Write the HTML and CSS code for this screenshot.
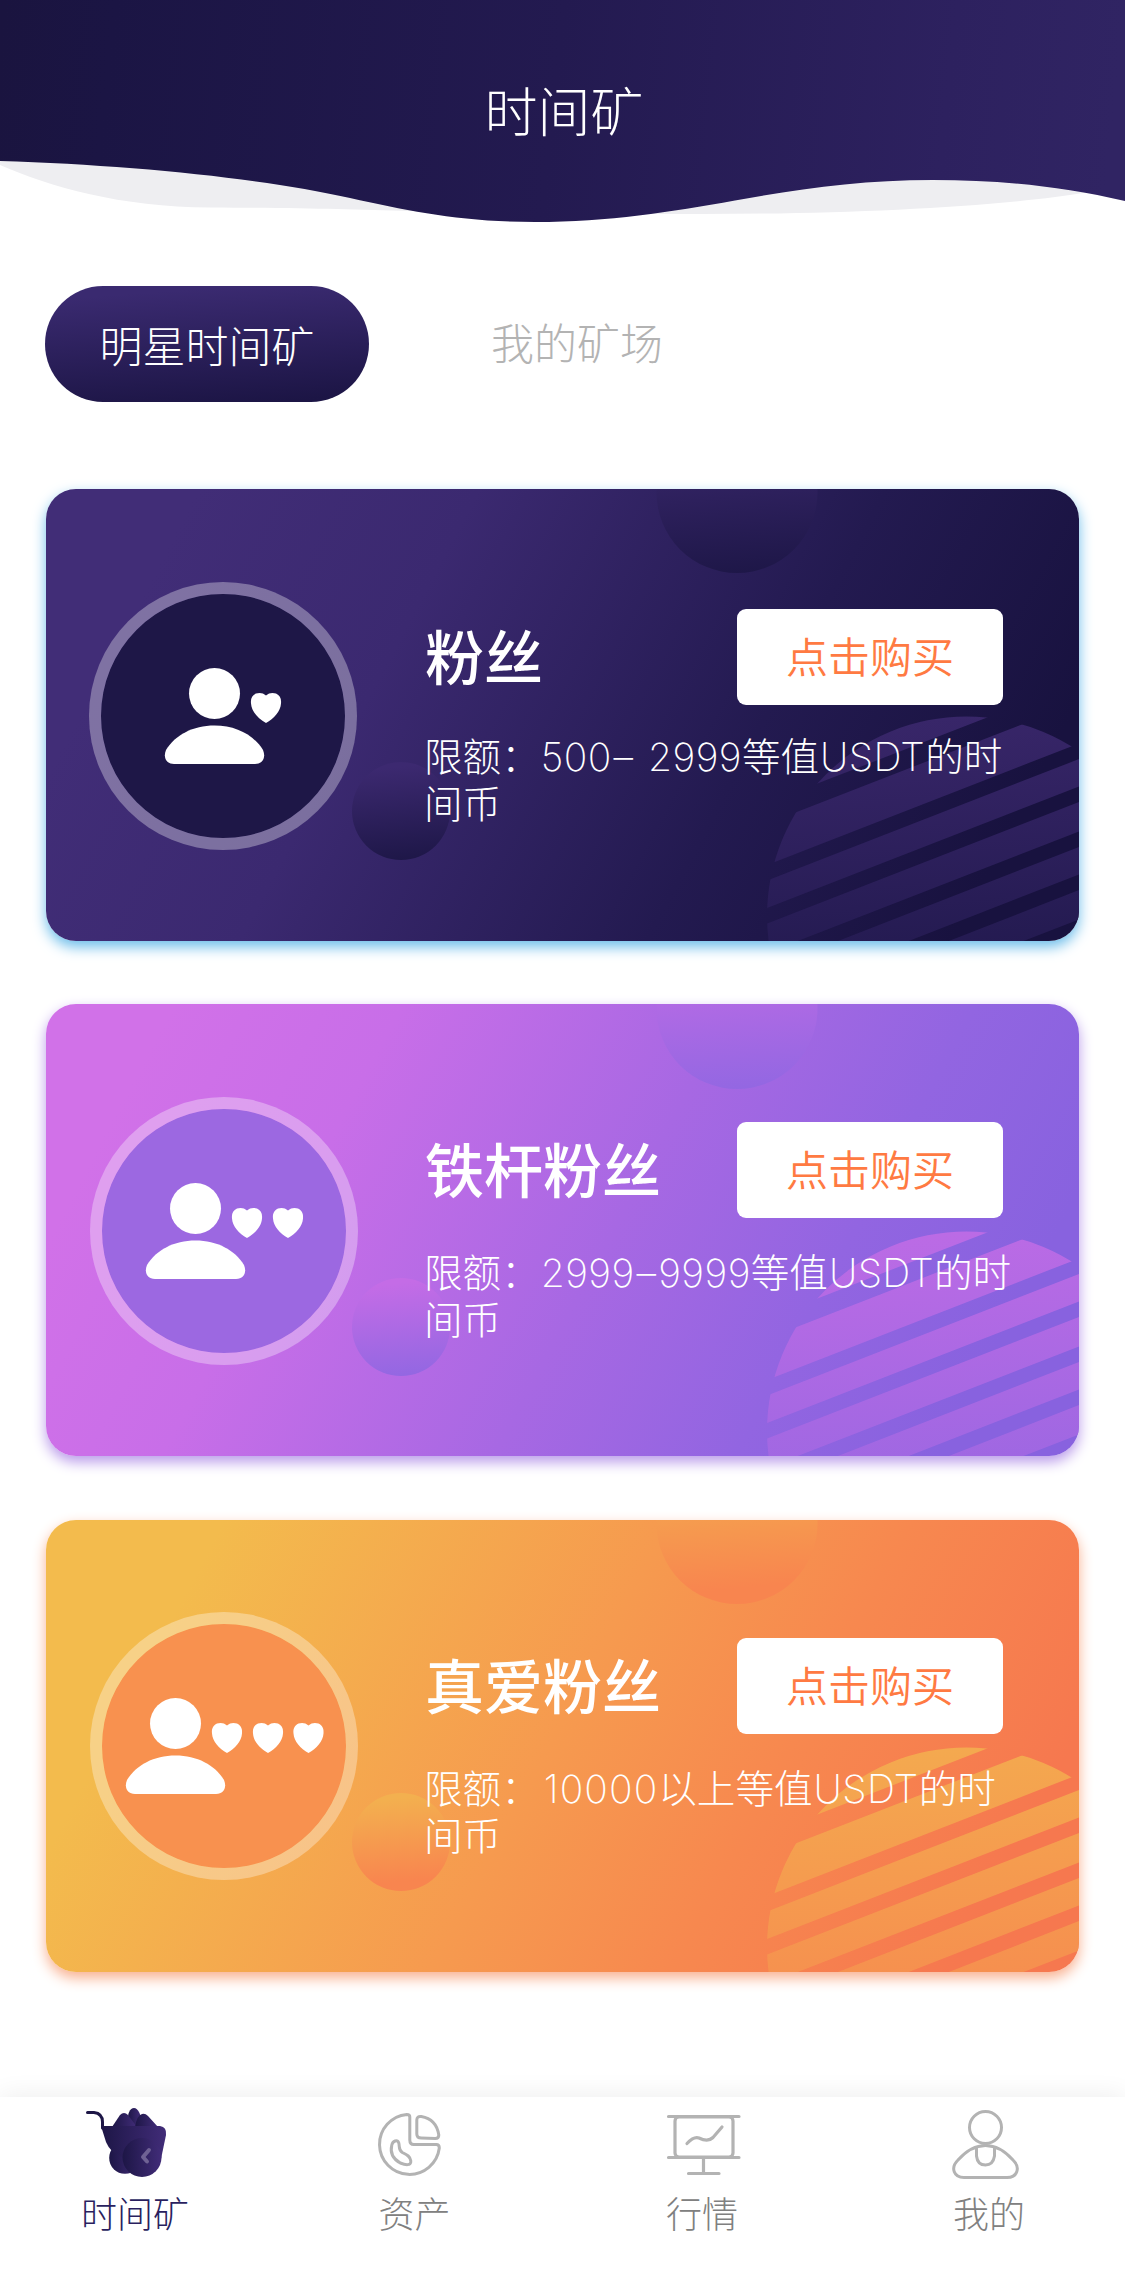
FILE: index.html
```html
<!DOCTYPE html>
<html lang="zh-CN">
<head>
<meta charset="utf-8">
<title>时间矿</title>
<link rel="stylesheet" href="styles.css">
</head>
<body>
<svg class="defs" width="0" height="0" aria-hidden="true">
  <defs>
    <linearGradient id="ball-night" x1=".45" y1="0" x2=".55" y2="1"><stop offset=".05" stop-color="#3c2970"/><stop offset="1" stop-color="#1e1748"/></linearGradient>
    <linearGradient id="ball-violet" x1=".45" y1="0" x2=".55" y2="1"><stop offset=".05" stop-color="#c46ce6"/><stop offset="1" stop-color="#9367e2"/></linearGradient>
    <linearGradient id="ball-amber" x1=".45" y1="0" x2=".55" y2="1"><stop offset=".05" stop-color="#f3b04f"/><stop offset=".9" stop-color="#f8854f"/></linearGradient>
    <linearGradient id="disc-night" x1=".5" y1="0" x2=".55" y2=".6"><stop offset="0" stop-color="#382669"/><stop offset="1" stop-color="#231a50"/></linearGradient>
    <linearGradient id="disc-violet" x1=".5" y1="0" x2=".55" y2=".6"><stop offset="0" stop-color="#bb6be5"/><stop offset="1" stop-color="#9e67e2"/></linearGradient>
    <linearGradient id="disc-amber" x1=".5" y1="0" x2=".55" y2=".6"><stop offset="0" stop-color="#f4a94f"/><stop offset="1" stop-color="#f68e4f"/></linearGradient>
    <mask id="stripes" maskUnits="userSpaceOnUse" x="700" y="200" width="340" height="260">
      <rect x="700" y="200" width="340" height="260" fill="#fff"/>
      <g stroke="#000" stroke-width="14.6">
        <path stroke-width="19" d="M700 332.5L1040 200.3"/>
        <path d="M700 392L1040 259.5"/>
        <path d="M700 435L1040 302.5"/>
        <path d="M700 480L1040 347.5"/>
        <path d="M700 523.5L1040 390.5"/>
        <path d="M700 568L1040 435.5"/>
      </g>
    </mask>
    <path id="heart" d="M15 3C18 0 22 0 25 1C29 3 30.500 6 30 11C29.500 19 23 26 15 30.500C7 26 .5 19 0 11C-.5 6 1 3 5 1C8 0 12 0 15 3Z"/>
    <g id="person">
      <circle cx="49.500" cy="25.500" r="25.500"/>
      <path d="M9 96C1 96-2 89 1 82C10 67 28 57.500 49.500 57.500S89 67 98 82C101 89 98 96 90 96Z"/>
    </g>
  </defs>
</svg>

<div class="screen">
  <header class="header">
    <svg class="header-bg" viewBox="0 0 1125 224" aria-hidden="true">
      <defs><linearGradient id="head" gradientUnits="userSpaceOnUse" x1="0" y1="30" x2="1110" y2="150"><stop offset="0" stop-color="#1a143f"/><stop offset=".1" stop-color="#1b1544"/><stop offset=".5" stop-color="#231a50"/><stop offset=".85" stop-color="#2d215f"/><stop offset="1" stop-color="#302463"/></linearGradient></defs>
      <path fill="#eeeef1" d="M0 165C50 187 120 207 210 207.500C300 208 350 209.500 410 211C500 213 600 214 700 214C850 214 1000 207 1090 192L900 150L0 150Z"/>
      <path fill="url(#head)" d="M0 0H1125V201C1060 186 1000 180 933 180C860 180 800 189 735 200.500C670 212 610 222 535 222C460 222 410 211 350 198C260 178 130 165 0 161Z"/>
    </svg>
    <h1 class="title">时间矿</h1>
  </header>

  <nav class="switch">
    <a class="switch-item switch-item-on">明星时间矿</a>
    <a class="switch-item">我的矿场</a>
  </nav>

  <main class="cards">
    <section class="card card-night">
      <svg class="decor" viewBox="0 0 1033 452" aria-hidden="true">
        <g fill="url(#ball-night)"><circle cx="691" cy="3.500" r="80.500"/><circle cx="355" cy="322" r="49"/></g>
        <circle cx="920.500" cy="427" r="199.500" fill="url(#disc-night)" mask="url(#stripes)"/>
      </svg>
      <div class="avatar">
        <svg width="268" height="268" viewBox="0 0 268 268" fill="#fff" aria-hidden="true"><use href="#person" x="76" y="86"/><use href="#heart" x="162" y="110.500"/></svg>
      </div>
      <div class="info">
        <div class="info-head"><h2 class="name">粉丝</h2><button class="buy">点击购买</button></div>
        <p class="limit">限额：<span class="lat">500<span class="dash">–</span> 2999</span>等值<span class="lat">USDT</span>的时<br>间币</p>
      </div>
    </section>

    <section class="card card-violet">
      <svg class="decor" viewBox="0 0 1033 452" aria-hidden="true">
        <g fill="url(#ball-violet)"><circle cx="691" cy="4.500" r="80.500"/><circle cx="355" cy="323" r="49"/></g>
        <circle cx="920.500" cy="427" r="199.500" fill="url(#disc-violet)" mask="url(#stripes)"/>
      </svg>
      <div class="avatar">
        <svg width="268" height="268" viewBox="0 0 268 268" fill="#fff" aria-hidden="true"><use href="#person" x="56" y="86"/><use href="#heart" x="142" y="110.500"/><use href="#heart" x="183" y="110.500"/></svg>
      </div>
      <div class="info">
        <div class="info-head"><h2 class="name">铁杆粉丝</h2><button class="buy">点击购买</button></div>
        <p class="limit">限额：<span class="lat">2999<span class="dash">–</span>9999</span>等值<span class="lat">USDT</span>的时<br>间币</p>
      </div>
    </section>

    <section class="card card-amber">
      <svg class="decor" viewBox="0 0 1033 452" aria-hidden="true">
        <g fill="url(#ball-amber)"><circle cx="691" cy="3.500" r="80.500"/><circle cx="355" cy="322" r="49"/></g>
        <circle cx="920.500" cy="427" r="199.500" fill="url(#disc-amber)" mask="url(#stripes)"/>
      </svg>
      <div class="avatar">
        <svg width="268" height="268" viewBox="0 0 268 268" fill="#fff" aria-hidden="true"><use href="#person" x="36" y="86"/><use href="#heart" x="122" y="110.500"/><use href="#heart" x="163" y="110.500"/><use href="#heart" x="203.500" y="110.500"/></svg>
      </div>
      <div class="info">
        <div class="info-head"><h2 class="name">真爱粉丝</h2><button class="buy">点击购买</button></div>
        <p class="limit">限额：<span class="lat lat-one">10000</span>以上等值<span class="lat">USDT</span>的时<br>间币</p>
      </div>
    </section>
  </main>

  <nav class="tabbar">
    <a class="tab tab-on">
      <svg width="90" height="80" viewBox="0 0 90 80" aria-hidden="true">
        <defs>
          <linearGradient id="cart"><stop offset="0" stop-color="#1d1646"/><stop offset="1" stop-color="#412c78"/></linearGradient>
        </defs>
        <path d="M6.500 12.500H13Q21.500 13.500 21.500 22V28" fill="none" stroke="#1d1646" stroke-width="3" stroke-linecap="round"/>
        <path fill="url(#cart)" d="M47 22C46 14 49 8 53 8C57 8 61 15 60 24L55 32Z"/>
        <path fill="url(#cart)" d="M31 27L39 15Q43 11 47 15L56 27Z"/>
        <path fill="url(#cart)" d="M54 27Q56 15 61 14Q64 13 67 16L77 27Z"/>
        <circle cx="44" cy="58" r="15.800" fill="url(#cart)"/>
        <path fill="url(#cart)" d="M20 26H79Q86 27 85 35L80 59L62 70L31 51Q27 47 25 42Z"/>
        <circle cx="61" cy="57.500" r="19.500" fill="url(#cart)"/>
        <path d="M68 50L62 57L66 61.500" fill="none" stroke="#6f6294" stroke-width="4" stroke-linecap="round" stroke-linejoin="round"/>
      </svg>
      <span>时间矿</span>
    </a>
    <a class="tab">
      <svg width="90" height="80" viewBox="0 0 90 80" aria-hidden="true">
        <g fill="none" stroke="#b3b3b3" stroke-width="3" stroke-linejoin="round" transform="translate(-.7)">
          <path d="M31.500 17Q31.500 14.500 28.500 14.500A30 30 0 1 0 61 48Q61 44.500 58 44.500H35.500Q31.500 44.500 31.500 40Z"/>
          <path d="M38.500 20Q38.500 16 43 16.500Q58 19 60.500 35Q60.500 38.500 57 38.500L43 38Q38.500 38 38.500 34Z"/>
          <path d="M20.500 43C19 39 14.500 41 13.500 45C11.500 53 15 59 22 63C27 65 33 66 32.500 61C32 56 28 54.500 24 52.500C20 50 21.500 47 20.500 43Z"/>
        </g>
      </svg>
      <span>资产</span>
    </a>
    <a class="tab">
      <svg width="90" height="80" viewBox="0 0 90 80" aria-hidden="true">
        <g fill="none" stroke="#b3b3b3" stroke-width="3.200" stroke-linecap="round">
          <path d="M2.500 16.500H73M2.500 57.500H73M37.500 58V73M22.500 73.500H53M21 43.500Q28 36 33 38Q42 42.500 47 37.500L56 27"/>
          <rect x="9" y="17" width="58" height="40" rx="4"/>
        </g>
      </svg>
      <span>行情</span>
    </a>
    <a class="tab">
      <svg width="90" height="80" viewBox="0 0 90 80" aria-hidden="true">
        <g fill="none" stroke="#b3b3b3" stroke-width="3">
          <circle cx="32.500" cy="27.500" r="16"/>
          <path d="M32.500 45.500C23.500 45.500 14 50 5 60C-3 68 1 77.500 11 77.500H54C64 77.500 68 68 60 60C51 50 41.500 45.500 32.500 45.500Z"/>
          <path d="M23.500 46.500V56Q24.500 65 32.500 65Q40 65 41.500 56V46.500"/>
        </g>
      </svg>
      <span>我的</span>
    </a>
  </nav>
</div>
</body>
</html>
```

FILE: styles.css
```css
* { box-sizing: border-box; }

body {
  margin: 0;
  background: #fff;
  font-family: "Noto Sans CJK SC", sans-serif;
  font-weight: 300;
}

h1, h2, p { margin: 0; }
svg { display: block; }
.defs { position: absolute; }

.screen {
  display: flex;
  flex-direction: column;
  width: 1125px;
  height: 2274px;
  overflow: hidden;
}

.header {
  position: relative;
  height: 224px;
  padding-top: 69px;
}

.header-bg {
  position: absolute;
  inset: 0;
  width: 1125px;
  height: 224px;
}

.title {
  position: relative;
  padding-left: 3px;
  color: #fff;
  font-size: 53px;
  font-weight: 300;
  line-height: 80px;
  text-align: center;
}

.switch {
  display: flex;
  gap: 69px;
  padding: 62px 45px 0;
}

.switch-item {
  width: 278px;
  height: 116px;
  color: #b3b3b3;
  font-size: 43px;
  line-height: 111px;
  text-align: center;
  white-space: nowrap;
}

.switch-item-on {
  width: 324px;
  border-radius: 58px;
  background: linear-gradient(176deg, #3a2a70 10%, #1c1545 95%);
  color: #fff;
  line-height: 116px;
}

.cards {
  display: flex;
  flex: 1;
  flex-direction: column;
  gap: 63px;
  padding: 87px 46px 0;
}

.card {
  position: relative;
  display: flex;
  height: 452px;
  flex: none;
  gap: 67px;
  padding-left: 44px;
  border-radius: 30px;
}

.card-night {
  gap: 68px;
  padding-left: 43px;
  background: linear-gradient(118deg, #412d77 12%, #3b2970 34%, #231a50 66%, #18123f 90%);
  box-shadow: 0 6px 14px #6cbdea;
}

.card-violet {
  background: linear-gradient(118deg, #d171e8 10%, #c86ee8 28%, #a768e3 54%, #9265e1 73%, #8862df 89%);
  box-shadow: 0 6px 14px #b99aea;
}

.card-amber {
  margin-top: 1px;
  background: linear-gradient(118deg, #f3bb4d 14%, #f69a4f 49%, #f7884f 68%, #f6784f 90%);
  box-shadow: 0 6px 14px #f9b08f;
}

.decor {
  position: absolute;
  inset: 0;
  width: 100%;
  height: 100%;
  border-radius: 30px;
  overflow: hidden;
}

.avatar {
  position: relative;
  width: 268px;
  height: 268px;
  margin-top: 93px;
  border: 12.500px solid rgba(255, 255, 255, .33);
  border-radius: 50%;
  background-clip: padding-box;
}

.avatar svg { margin: -12.500px; }

.card-night .avatar { background-color: #1e1747; }
.card-violet .avatar { background-color: #9c68e1; }
.card-amber .avatar { background-color: #f8914f; margin-top: 92px; }

.info {
  position: relative;
  width: 600px;
  padding-top: 118px;
  color: #fff;
}

.card-night .info { padding-top: 120px; }

.info-head {
  display: flex;
  justify-content: space-between;
  width: 578px;
}

.name {
  font-size: 59px;
  font-weight: 500;
  line-height: 91px;
  white-space: nowrap;
}

.buy {
  width: 266px;
  height: 96px;
  padding: 0 0 4px;
  border: 0;
  border-radius: 9px;
  background: #fff;
  color: #ff7a42;
  font: 350 42px/92px "Noto Sans CJK SC", sans-serif;
}

.limit {
  margin-top: 28.500px;
  margin-left: -1px;
  font-size: 38.600px;
  line-height: 47px;
  white-space: nowrap;
}

.card-night .limit { margin-top: 26px; }

.lat {
  padding-left: 1px;
  font-family: Inter, "Liberation Sans", sans-serif;
  font-size: 39px;
  font-weight: 250;
  letter-spacing: .4px;
  line-height: 1;
}

.lat-one {
  padding-left: 4px;
  letter-spacing: 1.100px;
}

.dash {
  display: inline-block;
  width: 23.600px;
  text-align: center;
}

.card-night .dash { margin-right: 1.500px; }

.tabbar {
  display: grid;
  grid-template-columns: 297.500px 287.500px 287px auto;
  height: 177px;
  padding-left: 81px;
  box-shadow: 0 -2px 24px rgba(0, 0, 0, .07);
}

.tab {
  padding-top: 3px;
  color: #808080;
  font-size: 36px;
  line-height: 65px;
  white-space: nowrap;
}

.tab svg { overflow: visible; }

.tab-on { color: #2a1f5f; }
```
